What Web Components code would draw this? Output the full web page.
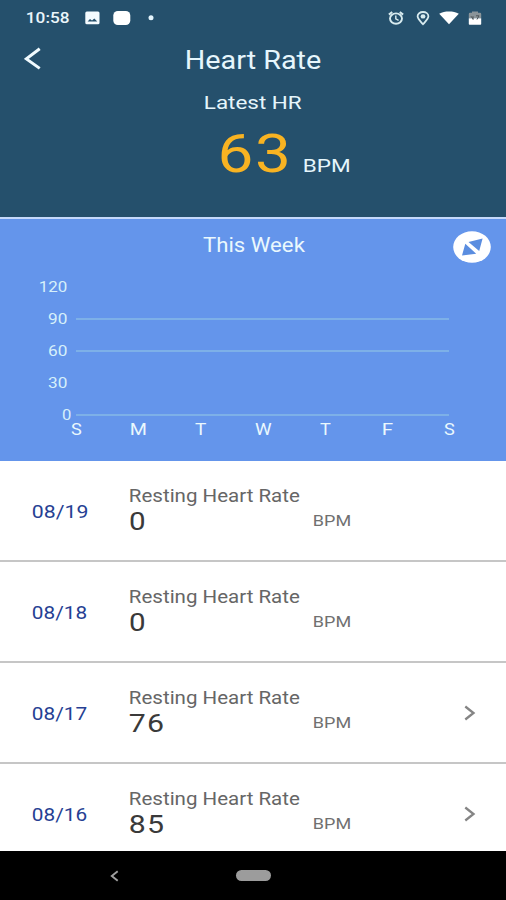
<!DOCTYPE html>
<html lang="en">
<head>
<meta charset="utf-8">
<title>Heart Rate</title>
<style>
html,body{margin:0;height:100%;overflow:hidden;background:#fff;font-family:Roboto,"Liberation Sans",sans-serif}
</style>
</head>
<body>
<heart-app></heart-app>
<script>
const define = (name, html, setup) => {
  const t = document.createElement('template');
  t.innerHTML = html;
  customElements.define(name, class extends HTMLElement {
    connectedCallback() {
      if (this.shadowRoot) return;
      this.attachShadow({mode: 'open'}).append(t.content.cloneNode(true));
      if (setup) setup(this, this.shadowRoot);
    }
  });
};

/* Text stretched horizontally so that its ink spans the "w" attribute. */
const ctx = document.createElement('canvas').getContext('2d');
define('wide-text', `<style>
:host{display:block;flex:none;white-space:nowrap}
span{display:inline-block;transform-origin:0 0;line-height:inherit}
</style><span><slot></slot></span>`, (el, root) => {
  const s = +el.getAttribute('size'), w = +el.getAttribute('w');
  const weight = el.getAttribute('weight') || 400;
  const ls = +el.getAttribute('spacing') || 0;
  const text = el.textContent.trim();
  ctx.font = `${weight} ${s}px Roboto`;
  const m = ctx.measureText(text);
  const k = w / (m.actualBoundingBoxLeft + m.actualBoundingBoxRight + ls * (text.length - 1));
  el.style.cssText += `;font-size:${s}px;line-height:${s}px;height:${s}px;width:${w}px;font-weight:${weight};letter-spacing:${ls}px`;
  root.querySelector('span').style.transform = `translateX(${m.actualBoundingBoxLeft * k}px) scaleX(${k})`;
});

define('status-bar', `<style>
:host{display:flex;height:36px;box-sizing:border-box;padding:0 24px 0 27px;align-items:center;color:#eaf6fb}
svg{display:block;flex:none}
.gap{flex:1}
</style>
<wide-text size="14.8" w="42" weight="500">10:58</wide-text>
<svg style="margin-left:16px" width="15" height="14" viewBox="0 0 15 14"><rect x=".3" y=".6" width="14.2" height="12.6" rx="1.5" fill="#f4fbff"/><path d="M2.6 10.6 5 8l2 1.600 2.300-2.200 3 3.200z" fill="#25506c"/></svg>
<svg style="margin-left:13px" width="18" height="16" viewBox="0 0 18 16"><rect x=".3" y="1" width="17" height="14" rx="4.5" fill="#fff"/></svg>
<svg style="margin-left:17px" width="6" height="6" viewBox="0 0 6 6"><circle cx="3" cy="2.8" r="2.5" fill="#e3f4fc"/></svg>
<div class="gap"></div>
<svg width="16" height="16" viewBox="0 0 16 16" fill="none" stroke="#d8ebef"><ellipse cx="8" cy="8.6" rx="6" ry="5.2" stroke-width="1.9"/><path d="M.9 4.6 4.200 2M15.100 4.600 11.800 2" stroke-width="2"/><path d="M7.800 5.400v3.500l2.800 1.400" stroke-width="1.400"/></svg>
<svg style="margin-left:12px" width="14" height="16" viewBox="0 0 14 16" fill="none" stroke="#d8ebef"><path d="M7 14.200C4 10.800 1.600 8.700 1.600 6.200 1.600 3.700 4 2 7 2s5.400 1.700 5.400 4.200C12.400 8.700 10 10.800 7 14.200z" stroke-width="1.800"/><ellipse cx="7" cy="6.400" rx="2.400" ry="2.200" fill="#d8ebef" stroke="none"/></svg>
<svg style="margin-left:9px" width="20" height="16" viewBox="0 0 20 16"><path d="M.2 3.800C3 2.100 6.500 1.600 10 1.600s7 .5 9.800 2.200L10 14.200z" fill="#fff"/></svg>
<svg style="margin-left:9px" width="14" height="16" viewBox="0 0 14 16"><path d="M.8 8V4Q.8 2.800 2 2.800H4V1.500h6v1.300h2q1.200 0 1.200 1.200v4z" fill="#8a9499"/><path d="M.8 8.300h12.400v5.700q0 .8-.8.8H1.600q-.8 0-.8-.8z" fill="#fff"/><path d="M3 6.200l2.200 3M5 6.200v3.500M8 5.800h3L9 9.500" stroke="#4e5558" stroke-width="1" fill="none"/></svg>`);

define('title-bar', `<style>
:host{display:flex;height:46px;padding-left:24px;align-items:flex-start}
svg{margin-top:11px;flex:none}
wide-text{margin:11.500px 0 0 146px}
</style>
<svg width="17" height="24" viewBox="0 0 17 24" fill="none" stroke="#f1fbff" stroke-width="3"><path d="M15.700 1.800 2.400 11.900l13.300 9.500"/></svg>
<wide-text size="25" w="134">Heart Rate</wide-text>`);

define('latest-reading', `<style>
:host{display:flex;flex-direction:column}
.label{margin:11px 0 0 205px}
.row{display:flex;align-items:baseline;gap:17px;padding:15px 0 0 220.500px}
.value{color:#f8b322}
</style>
<wide-text class="label" size="19" w="97">Latest HR</wide-text>
<div class="row"><wide-text class="value" size="54" w="66" spacing="1.500">63</wide-text><wide-text size="19" w="46">BPM</wide-text></div>`);

define('expand-button', `<style>:host{display:block;width:38px;height:32px}svg{display:block}</style>
<svg width="38" height="32" viewBox="0 0 38 32"><ellipse cx="19" cy="16" rx="18.800" ry="15.800" fill="#fff"/><path d="M15.500 11 29.600 7.600 26.200 20zM12.300 12.800 23.200 22.700 9 24.500z" fill="#5a8de0"/></svg>`);

define('week-chart', `<style>
:host{display:flex;flex-direction:column;box-sizing:border-box;height:244px;border-top:2px solid #c5d9fb;background:#6495eb;color:#eaf8fd}
header{display:flex;height:52px;padding-left:202.500px;align-items:flex-start}
header wide-text{margin-top:16.500px}
expand-button{margin:12px 0 0 148.500px}
.tick{display:flex;height:32px;align-items:center;color:#d6f0fa}
.lab{width:67px;display:flex;justify-content:flex-end;flex:none}
.tick:last-child .lab{width:71px}
.line{height:2px;width:373px;margin:0 0 0 9px;background:#7db0e8}
.tick:last-child .line{margin-left:5px}
.days{display:grid;grid-template-columns:repeat(7,62.200px);padding-left:45.500px;margin-top:-9.500px}
.days wide-text{justify-self:center}
</style>
<header><wide-text size="19.500" w="102">This Week</wide-text><expand-button></expand-button></header>
<div class="ticks"></div><div class="days"></div>`, (el, root) => {
  root.querySelector('.ticks').innerHTML = [[120,27],[90,19,1],[60,19,1],[30,19],[0,9,1]].map(([v,w,l]) =>
    `<div class="tick"><div class="lab"><wide-text size="14.800" w="${w}">${v}</wide-text></div>${l ? '<div class="line"></div>' : ''}</div>`).join('');
  root.querySelector('.days').innerHTML = [['S',11],['M',15.500],['T',11.500],['W',17],['T',11],['F',10],['S',11]].map(([d,w]) =>
    `<wide-text size="16.500" w="${w}">${d}</wide-text>`).join('');
});

define('reading-row', `<style>
:host{display:grid;grid-template-columns:97.500px 184px 1fr;box-sizing:border-box;height:101px;padding-left:32.500px;border-bottom:2px solid #c6c6c6;background:#fff;flex:none}
.date{color:#263f93;margin-top:42px}
.name{color:#666;margin-top:26.500px}
.value{color:#3a3a3a;margin-top:3px}
.unit{color:#707070;margin-top:52.500px}
.end{display:flex}
svg{margin:44.500px 0 0 113px;flex:none}
</style>
<wide-text class="date" size="18" w="54.500"></wide-text>
<div><wide-text class="name" size="17.500" w="169.500">Resting Heart Rate</wide-text><wide-text class="value" size="26.500" spacing="1"></wide-text></div>
<div class="end"><wide-text class="unit" size="15.500" w="36.500">BPM</wide-text></div>`, (el, root) => {
  const fill = (sel, text, w) => {
    const old = root.querySelector(sel), n = old.cloneNode();
    const fresh = document.createElement('wide-text');
    fresh.className = n.className;
    fresh.textContent = text;
    fresh.setAttribute('size', old.getAttribute('size'));
    fresh.setAttribute('spacing', old.getAttribute('spacing') || 0);
    fresh.setAttribute('w', w);
    old.replaceWith(fresh);
  };
  const v = el.getAttribute('value');
  fill('.date', el.getAttribute('date'), 54);
  fill('.value', v, v.length > 1 ? 33 : 14.5);
  if (el.hasAttribute('more')) root.querySelector('.end').insertAdjacentHTML('beforeend',
    '<svg width="12" height="16" viewBox="0 0 12 16" fill="none" stroke="#858585" stroke-width="2.300"><path d="M1.300 1.500 9.500 8 1.300 14.500"/></svg>');
  const chevron = root.querySelector('svg');
  if (chevron) chevron.style.marginTop = '42px';
});

define('nav-bar', `<style>
:host{display:flex;height:49px;flex:none;background:#000;align-items:center;padding-left:110px}
.pill{width:35px;height:11px;border-radius:5.500px;background:#9c9c9c;margin-left:117px}
</style>
<svg width="9" height="12" viewBox="0 0 9 12" fill="none" stroke="#a0a0a0" stroke-width="1.900"><path d="M7.700 1.300 1.800 6l5.900 4.700"/></svg><div class="pill"></div>`);

define('heart-app', `<style>
:host{display:flex;flex-direction:column;height:900px;width:506px}
.top{height:217px;background:#25506c;color:#e6f6fc;flex:none}
.list{flex:1;min-height:0;overflow:hidden;display:flex;flex-direction:column}
</style>
<div class="top"><status-bar></status-bar><title-bar></title-bar><latest-reading></latest-reading></div>
<week-chart></week-chart>
<div class="list">
<reading-row date="08/19" value="0"></reading-row>
<reading-row date="08/18" value="0"></reading-row>
<reading-row date="08/17" value="76" more></reading-row>
<reading-row date="08/16" value="85" more></reading-row>
</div>
<nav-bar></nav-bar>`);
</script>
</body>
</html>
